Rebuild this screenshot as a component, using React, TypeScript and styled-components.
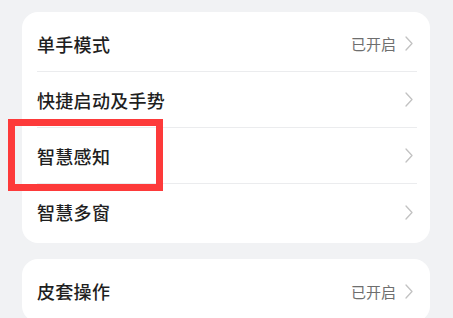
import React from "react";
import styled, { createGlobalStyle } from "styled-components";

const GlobalStyle = createGlobalStyle`
  html, body {
    margin: 0;
    padding: 0;
    background: #f1f2f4;
  }
  body {
    font-family: "Noto Sans CJK SC", "Noto Sans", sans-serif;
  }
`;

const Page = styled.div`
  width: 453px;
  height: 318px;
  overflow: hidden;
  box-sizing: border-box;
  padding: 12px 23px 0 22px;
  display: flex;
  flex-direction: column;
  gap: 16px;
  position: relative;
`;

const Card = styled.div`
  background: #ffffff;
  border-radius: 16px;
  padding: 4px 0 3px;
`;

const Row = styled.div<{ $last?: boolean }>`
  height: 56px;
  margin: 0 13px 0 15px;
  display: flex;
  align-items: center;
  box-sizing: border-box;
  border-bottom: ${(p) => (p.$last ? "none" : "1px solid #ebecee")};
`;

const Title = styled.span`
  flex: 1;
  font-size: 18px;
  color: #1f1f1f;
  font-weight: 500;
  letter-spacing: 0.3px;
`;

const Status = styled.span`
  font-size: 15px;
  color: #6e6e6e;
  margin-right: 9px;
`;

const Chevron = styled.svg`
  width: 8px;
  height: 15px;
  margin-right: 4px;
  display: block;
`;

const Highlight = styled.div`
  position: absolute;
  left: 8px;
  top: 119px;
  width: 155px;
  height: 72px;
  box-sizing: border-box;
  border: 7px solid #fd3a3a;
`;

type Item = {
  /** Row label. */
  title: string;
  /** Optional status text shown before the chevron. */
  status?: string;
};

const groups: Item[][] = [
  [
    { title: "单手模式", status: "已开启" },
    { title: "快捷启动及手势" },
    { title: "智慧感知" },
    { title: "智慧多窗" },
  ],
  [{ title: "皮套操作", status: "已开启" }],
];

const Arrow = (): JSX.Element => (
  <Chevron viewBox="0 0 8 15">
    <path
      d="M1 1 L7 7.5 L1 14"
      fill="none"
      stroke="#c2c2c2"
      strokeWidth="1.3"
      strokeLinecap="round"
      strokeLinejoin="round"
    />
  </Chevron>
);

const App = (): JSX.Element => {
  return (
    <>
      <GlobalStyle />
      <Page>
        {groups.map((items, gi) => (
          <Card key={gi}>
            {items.map((item, i) => (
              <Row key={item.title} $last={i === items.length - 1}>
                <Title>{item.title}</Title>
                {item.status && <Status>{item.status}</Status>}
                <Arrow />
              </Row>
            ))}
          </Card>
        ))}
        <Highlight />
      </Page>
    </>
  );
};

export default App;
